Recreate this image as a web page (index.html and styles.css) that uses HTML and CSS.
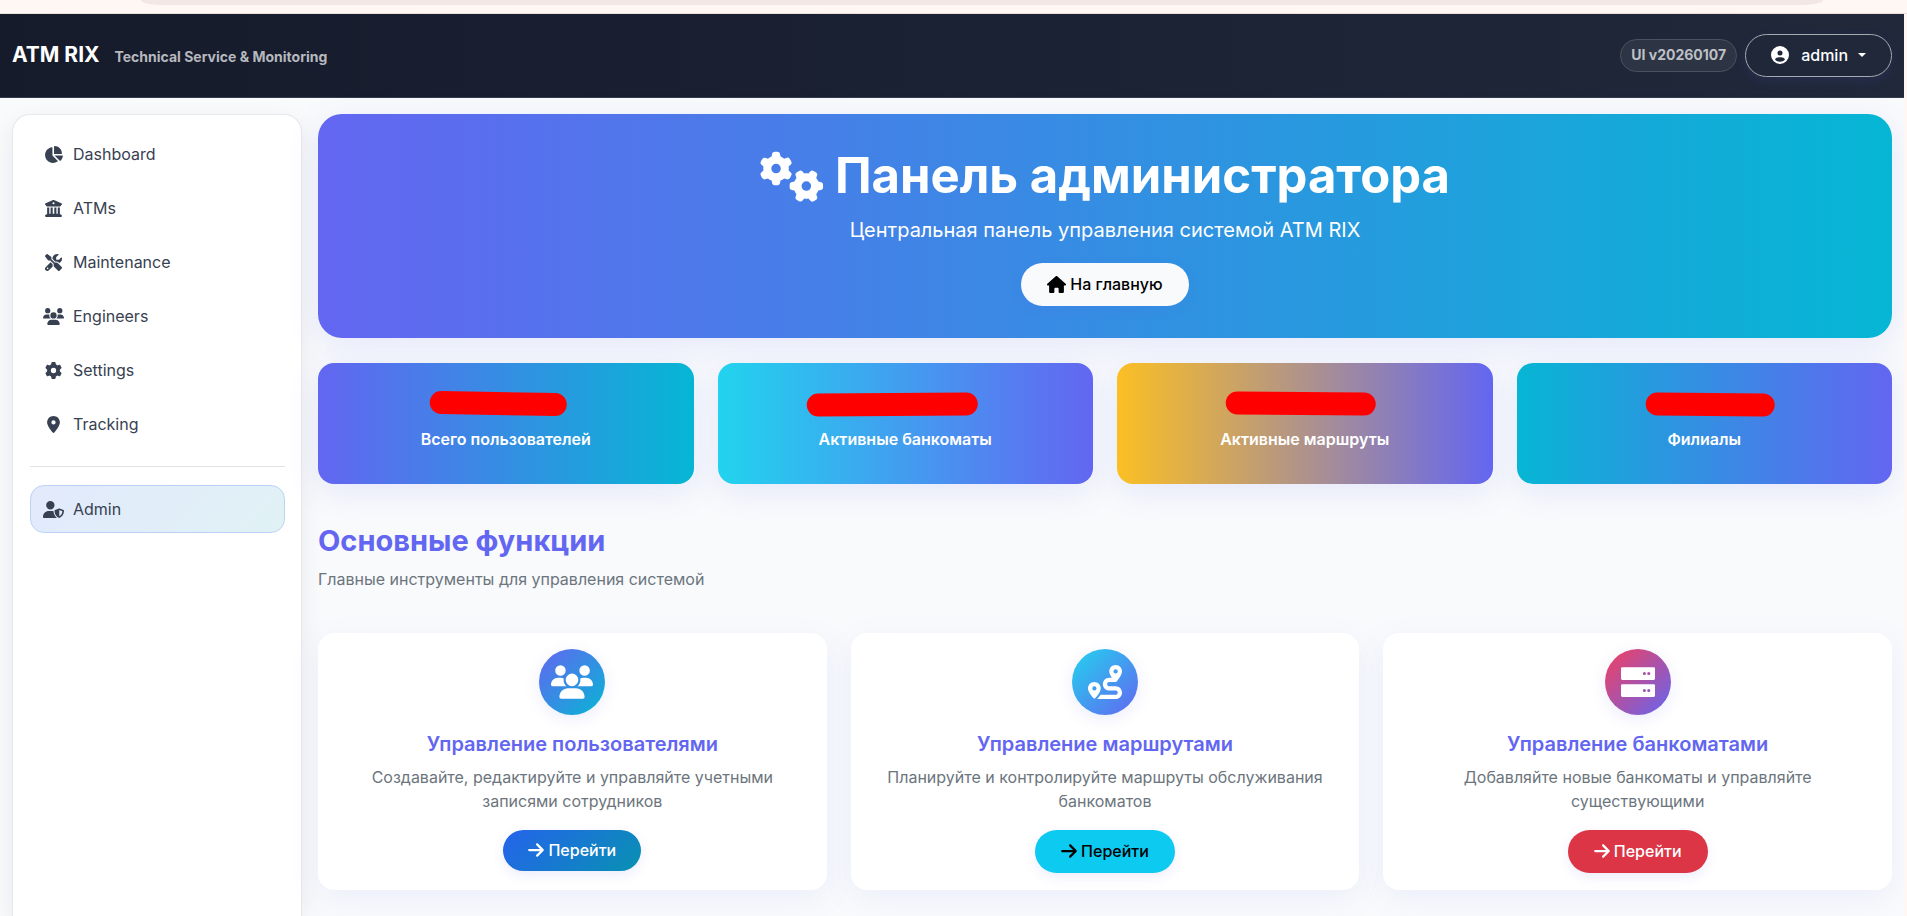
FILE: index.html
```html
<!DOCTYPE html>
<html lang="ru">
<head>
<meta charset="utf-8">
<title>ATM RIX</title>
<link rel="stylesheet" href="styles.css">
</head>
<body>
<svg class="sprite" aria-hidden="true">
  <symbol id="chart-pie" viewBox="0 0 576 512"><path d="M304 240V16.6c0-9 7-16.6 16-16.6C443.7 0 544 100.3 544 224c0 9-7.6 16-16.6 16H304zM32 272C32 150.7 122.1 50.3 239 34.3c9.2-1.3 17 6.1 17 15.4V288L412.5 444.5c6.7 6.7 6.2 17.7-1.5 23.1C371.8 495.6 323.8 512 272 512C139.5 512 32 404.6 32 272zm526.4 16c9.3 0 16.6 7.8 15.4 17c-7.7 55.9-34.6 105.6-73.9 142.3c-6 5.6-15.4 5.2-21.2-.7L320 288H558.4z"/></symbol>
  <symbol id="bank" viewBox="0 0 512 512"><path d="M243.4 2.6l-224 96c-14 6-21.8 21-18.7 35.8S16.8 160 32 160v8c0 13.3 10.7 24 24 24H456c13.3 0 24-10.7 24-24v-8c15.2 0 28.3-10.7 31.3-25.6s-4.8-29.9-18.7-35.8l-224-96c-8-3.4-17.2-3.4-25.2 0zM128 224H64V420.3c-.6 .3-1.2 .7-1.8 1.1l-48 32c-11.7 7.8-17 22.4-12.9 35.9S17.9 512 32 512H480c14.1 0 26.5-9.2 30.6-22.7s-1.1-28.1-12.9-35.9l-48-32c-.6-.4-1.2-.7-1.8-1.1V224H384V416H344V224H280V416H232V224H168V416H128V224zM256 64a32 32 0 1 1 0 64 32 32 0 1 1 0-64z"/></symbol>
  <symbol id="tools" viewBox="0 0 512 512"><path d="M78.6 5C69.1-2.4 55.6-1.5 47 7L7 47c-8.5 8.5-9.4 22-2.1 31.6l80 104c4.5 5.9 11.6 9.4 19 9.4h54.1l109 109c-14.7 29-10 65.4 14.3 89.6l112 112c12.5 12.5 32.8 12.5 45.3 0l64-64c12.5-12.5 12.5-32.8 0-45.3l-112-112c-24.2-24.2-60.6-29-89.6-14.3l-109-109V104c0-7.5-3.5-14.5-9.4-19L78.6 5zM19.9 396.1C7.2 408.8 0 426.1 0 444.1C0 481.6 30.4 512 67.9 512c18 0 35.3-7.2 48-19.9L233.7 374.3c-7.8-20.9-9-43.6-3.6-65.1l-61.7-61.7L19.9 396.1zM512 144c0-10.5-1.1-20.7-3.2-30.5c-2.4-11.2-16.1-14.1-24.2-6l-63.9 63.9c-3 3-7.1 4.7-11.3 4.7H352c-8.8 0-16-7.2-16-16V102.6c0-4.2 1.7-8.3 4.7-11.3l63.9-63.9c8.1-8.1 5.2-21.8-6-24.2C388.7 1.1 378.5 0 368 0C288.5 0 224 64.5 224 144l0 .8 85.3 85.3c36-9.1 75.8 .5 104 28.7L429 274.5c49-23 83-72.8 83-130.5zM56 432a24 24 0 1 1 48 0 24 24 0 1 1 -48 0z"/></symbol>
  <symbol id="users" viewBox="0 0 640 512"><path d="M144 0a80 80 0 1 1 0 160A80 80 0 1 1 144 0zM512 0a80 80 0 1 1 0 160A80 80 0 1 1 512 0zM0 298.7C0 239.8 47.8 192 106.7 192h42.7c15.9 0 31 3.5 44.6 9.7c-1.3 7.2-1.9 14.7-1.9 22.3c0 38.2 16.8 72.5 43.3 96c-.2 0-.4 0-.7 0H21.3C9.6 320 0 310.4 0 298.7zM405.3 320c-.2 0-.4 0-.7 0c26.6-23.5 43.3-57.8 43.3-96c0-7.6-.7-15-1.9-22.3c13.6-6.3 28.7-9.7 44.6-9.7h42.7C592.2 192 640 239.8 640 298.7c0 11.8-9.6 21.3-21.3 21.3H405.3zM224 224a96 96 0 1 1 192 0 96 96 0 1 1 -192 0zM128 485.3C128 411.7 187.7 352 261.3 352H378.7C452.3 352 512 411.7 512 485.3c0 14.7-11.9 26.7-26.7 26.7H154.7c-14.7 0-26.7-11.9-26.7-26.7z"/></symbol>
  <symbol id="gear" viewBox="0 0 512 512"><path d="M495.9 166.6c3.2 8.7 .5 18.4-6.4 24.6l-43.3 39.4c1.1 8.3 1.7 16.8 1.7 25.4s-.6 17.1-1.7 25.4l43.3 39.4c6.9 6.2 9.6 15.9 6.4 24.6c-4.4 11.9-9.7 23.3-15.8 34.3l-4.7 8.1c-6.6 11-14 21.4-22.1 31.2c-5.9 7.2-15.7 9.6-24.5 6.8l-55.7-17.7c-13.4 10.3-28.2 18.9-44 25.4l-12.5 57.1c-2 9.1-9 16.3-18.2 17.8c-13.8 2.3-28 3.5-42.5 3.5s-28.7-1.2-42.5-3.5c-9.2-1.5-16.2-8.7-18.2-17.8l-12.5-57.1c-15.8-6.5-30.6-15.1-44-25.4L83.1 425.9c-8.8 2.8-18.6 .3-24.5-6.8c-8.1-9.8-15.5-20.2-22.1-31.2l-4.7-8.1c-6.1-11-11.4-22.4-15.8-34.3c-3.2-8.7-.5-18.4 6.4-24.6l43.3-39.4C64.6 273.1 64 264.6 64 256s.6-17.1 1.7-25.4L22.4 191.2c-6.9-6.2-9.6-15.9-6.4-24.6c4.4-11.9 9.7-23.3 15.8-34.3l4.7-8.1c6.6-11 14-21.4 22.1-31.2c5.9-7.2 15.7-9.6 24.5-6.8l55.7 17.7c13.4-10.3 28.2-18.9 44-25.4l12.5-57.1c2-9.1 9-16.3 18.2-17.8C227.3 1.2 241.5 0 256 0s28.7 1.2 42.5 3.5c9.2 1.5 16.2 8.7 18.2 17.8l12.5 57.1c15.8 6.5 30.6 15.1 44 25.4l55.7-17.7c8.8-2.8 18.6-.3 24.5 6.8c8.1 9.8 15.5 20.2 22.1 31.2l4.7 8.1c6.1 11 11.4 22.4 15.8 34.3zM256 336a80 80 0 1 0 0-160 80 80 0 1 0 0 160z"/></symbol>
  <symbol id="pin" viewBox="0 0 384 512"><path d="M215.7 499.2C267 435 384 279.4 384 192C384 86 298 0 192 0S0 86 0 192c0 87.4 117 243 168.3 307.2c12.3 15.3 35.1 15.3 47.4 0zM192 128a64 64 0 1 1 0 128 64 64 0 1 1 0-128z"/></symbol>
  <symbol id="user-shield" viewBox="0 0 640 512"><path d="M224 256A128 128 0 1 0 224 0a128 128 0 1 0 0 256zm-45.7 48C79.8 304 0 383.8 0 482.3C0 498.7 13.3 512 29.7 512H418.3c1.8 0 3.5-.2 5.3-.5c-76.3-55.1-99.8-141-103.1-200.2c-16.1-4.8-33.1-7.3-50.7-7.3H178.3zm308.8-78.3l-120 48C358 277.4 352 286.2 352 296c0 63.3 25.9 168.8 134.8 214.2c5.9 2.5 12.6 2.5 18.5 0C614.1 464.8 640 359.3 640 296c0-9.8-6-18.6-15.1-22.3l-120-48c-5.7-2.3-12.1-2.3-17.8 0zM591.4 312c-3.9 50.7-27.2 116.7-95.4 149.7V273.8L591.4 312z"/></symbol>
  <symbol id="gears" viewBox="0 0 640 512"><path d="M308.5 135.3c7.1-6.3 9.9-16.2 6.2-25c-2.3-5.3-4.8-10.5-7.6-15.5L304 89.4c-3-5-6.3-9.9-9.8-14.6c-5.7-7.6-15.7-10.1-24.7-7.1l-28.2 9.3c-10.7-8.8-23-16-36.2-20.9L199 27.1c-1.9-9.3-9.1-16.7-18.5-17.8C173.9 8.4 167.2 8 160.4 8h-.7c-6.8 0-13.5 .4-20.1 1.2c-9.4 1.1-16.6 8.6-18.5 17.8L115 56.1c-13.3 5-25.5 12.1-36.2 20.9L50.5 67.8c-9-3-19-.5-24.7 7.1c-3.5 4.7-6.8 9.6-9.9 14.6l-3 5.3c-2.8 5-5.3 10.2-7.6 15.6c-3.7 8.7-.9 18.6 6.2 25l22.2 19.8C32.6 161.9 32 168.9 32 176s.6 14.1 1.7 20.9L11.5 216.7c-7.1 6.3-9.9 16.2-6.2 25c2.3 5.3 4.8 10.5 7.6 15.6l3 5.2c3 5.1 6.3 9.9 9.9 14.6c5.7 7.6 15.7 10.1 24.7 7.1l28.2-9.3c10.7 8.8 23 16 36.2 20.9l6.1 29.1c1.9 9.3 9.1 16.7 18.5 17.8c6.7 .8 13.5 1.2 20.4 1.2s13.7-.4 20.4-1.2c9.4-1.1 16.6-8.6 18.5-17.8l6.1-29.1c13.3-5 25.5-12.1 36.2-20.9l28.2 9.3c9 3 19 .5 24.7-7.1c3.5-4.7 6.8-9.5 9.8-14.6l3.1-5.4c2.8-5 5.3-10.2 7.6-15.5c3.7-8.7 .9-18.6-6.2-25l-22.2-19.8c1.1-6.8 1.7-13.8 1.7-20.9s-.6-14.1-1.7-20.9l22.2-19.8zM112 176a48 48 0 1 1 96 0 48 48 0 1 1 -96 0zM504.7 500.5c6.3 7.1 16.2 9.9 25 6.2c5.3-2.3 10.5-4.8 15.5-7.6l5.4-3.1c5-3 9.9-6.3 14.6-9.8c7.6-5.7 10.1-15.7 7.1-24.7l-9.3-28.2c8.8-10.7 16-23 20.9-36.2l29.1-6.1c9.3-1.9 16.7-9.1 17.8-18.5c.8-6.7 1.2-13.5 1.2-20.4s-.4-13.7-1.2-20.4c-1.1-9.4-8.6-16.6-17.8-18.5L583.9 307c-5-13.3-12.1-25.5-20.9-36.2l9.3-28.2c3-9 .5-19-7.1-24.7c-4.7-3.5-9.6-6.8-14.6-9.9l-5.3-3c-5-2.8-10.2-5.3-15.6-7.6c-8.7-3.7-18.6-.9-25 6.2l-19.8 22.2c-6.8-1.1-13.8-1.7-20.9-1.7s-14.1 .6-20.9 1.7l-19.8-22.2c-6.3-7.1-16.2-9.9-25-6.2c-5.3 2.3-10.5 4.8-15.6 7.6l-5.2 3c-5.1 3-9.9 6.3-14.6 9.9c-7.6 5.7-10.1 15.7-7.1 24.7l9.3 28.2c-8.8 10.7-16 23-20.9 36.2L315.1 313c-9.3 1.9-16.7 9.1-17.8 18.5c-.8 6.7-1.2 13.5-1.2 20.4s.4 13.7 1.2 20.4c1.1 9.4 8.6 16.6 17.8 18.5l29.1 6.1c5 13.3 12.1 25.5 20.9 36.2l-9.3 28.2c-3 9-.5 19 7.1 24.7c4.7 3.5 9.5 6.8 14.6 9.8l5.4 3.1c5 2.8 10.2 5.3 15.5 7.6c8.7 3.7 18.6 .9 25-6.2l19.8-22.2c6.8 1.1 13.8 1.7 20.9 1.7s14.1-.6 20.9-1.7l19.8 22.2zM464 304a48 48 0 1 1 0 96 48 48 0 1 1 0-96z"/></symbol>
  <symbol id="house" viewBox="0 0 576 512"><path d="M575.8 255.5c0 18-15 32.1-32 32.1h-32l.7 160.2c0 2.7-.2 5.4-.5 8.1V472c0 22.1-17.9 40-40 40H456c-1.1 0-2.2 0-3.3-.1c-1.4 .1-2.8 .1-4.2 .1H416 392c-22.1 0-40-17.9-40-40V448 384c0-17.7-14.3-32-32-32H256c-17.7 0-32 14.3-32 32v64 24c0 22.1-17.9 40-40 40H160 128.1c-1.5 0-3-.1-4.5-.2c-1.2 .1-2.4 .2-3.6 .2H104c-22.1 0-40-17.9-40-40V360c0-.9 0-1.9 .1-2.8V287.6H32c-18 0-32-14-32-32.1c0-9 3-17 10-24L266.4 8c7-7 15-8 22-8s15 2 21 7L564.8 231.5c8 7 12 15 11 24z"/></symbol>
  <symbol id="arrow" viewBox="0 0 448 512"><path d="M438.6 278.6c12.5-12.5 12.5-32.8 0-45.3l-160-160c-12.5-12.5-32.8-12.5-45.3 0s-12.5 32.8 0 45.3L338.8 224 32 224c-17.7 0-32 14.3-32 32s14.3 32 32 32l306.7 0L233.4 393.4c-12.5 12.5-12.5 32.8 0 45.3s32.8 12.5 45.3 0l160-160z"/></symbol>
  <symbol id="route" viewBox="0 0 512 512"><path d="M512 96c0 50.2-59.1 125.1-84.6 155c-3.8 4.4-9.4 6.1-14.5 5H320c-17.7 0-32 14.3-32 32s14.3 32 32 32h96c53 0 96 43 96 96s-43 96-96 96H139.6c8.7-9.9 19.3-22.6 30-36.8c6.3-8.4 12.8-17.6 19-27.2H416c17.7 0 32-14.3 32-32s-14.3-32-32-32H320c-53 0-96-43-96-96s43-96 96-96h39.8c-21-31.5-39.8-67.7-39.8-96c0-53 43-96 96-96s96 43 96 96zM117.1 489.1c-3.8 4.3-7.2 8.1-10.1 11.3l-1.8 2-.2-.2c-6 4.6-14.6 4-20-1.8C59.8 473 0 402.5 0 352c0-53 43-96 96-96s96 43 96 96c0 30-21.1 67-43.5 97.9c-10.7 14.7-21.7 28-30.8 38.5l-.6 .7zM128 352a32 32 0 1 0 -64 0 32 32 0 1 0 64 0zM416 128a32 32 0 1 0 0-64 32 32 0 1 0 0 64z"/></symbol>
  <symbol id="server" viewBox="0 0 512 512"><path fill-rule="evenodd" d="M20 32H492a20 20 0 0 1 20 20V204a20 20 0 0 1 -20 20H20a20 20 0 0 1 -20 -20V52a20 20 0 0 1 20 -20zM352 104a24 24 0 1 0 0 48 24 24 0 1 0 0-48zM418 104a24 24 0 1 0 0 48 24 24 0 1 0 0-48zM20 288H492a20 20 0 0 1 20 20V460a20 20 0 0 1 -20 20H20a20 20 0 0 1 -20 -20V308a20 20 0 0 1 20 -20zM352 360a24 24 0 1 0 0 48 24 24 0 1 0 0-48zM418 360a24 24 0 1 0 0 48 24 24 0 1 0 0-48z"/></symbol>
  <symbol id="circle-user" viewBox="0 0 512 512"><path d="M399 384.2C376.9 345.8 335.4 320 288 320H224c-47.4 0-88.9 25.8-111 64.2c35.2 39.2 86.2 63.8 143 63.8s107.8-24.7 143-63.8zM0 256a256 256 0 1 1 512 0A256 256 0 1 1 0 256zm256 16a72 72 0 1 0 0-144 72 72 0 1 0 0 144z"/></symbol>
</svg>

<div class="browser-edge"><div class="address-bar"></div></div>

<div class="page">
  <header class="topbar">
    <a class="brand" href="#">ATM RIX <small class="tagline">Technical Service &amp; Monitoring</small></a>
    <div class="topbar-end">
      <span class="version">UI v20260107</span>
      <button class="account" type="button"><svg class="icon-16"><use href="#circle-user"/></svg><span>admin</span><i class="caret"></i></button>
    </div>
  </header>

  <div class="layout">
    <nav class="sidebar" aria-label="Menu">
      <a class="nav-link" href="#"><span class="nav-icon"><svg class="icon-18"><use href="#chart-pie"/></svg></span>Dashboard</a>
      <a class="nav-link" href="#"><span class="nav-icon"><svg class="icon-17"><use href="#bank"/></svg></span>ATMs</a>
      <a class="nav-link" href="#"><span class="nav-icon"><svg class="icon-17"><use href="#tools"/></svg></span>Maintenance</a>
      <a class="nav-link" href="#"><span class="nav-icon"><svg class="icon-wide"><use href="#users"/></svg></span>Engineers</a>
      <a class="nav-link" href="#"><span class="nav-icon"><svg class="icon-17"><use href="#gear"/></svg></span>Settings</a>
      <a class="nav-link" href="#"><span class="nav-icon"><svg class="icon-17"><use href="#pin"/></svg></span>Tracking</a>
      <hr class="divider">
      <a class="nav-link active" href="#" aria-current="page"><span class="nav-icon"><svg class="icon-wide"><use href="#user-shield"/></svg></span>Admin</a>
    </nav>

    <main class="content">
      <section class="hero">
        <h1 class="hero-title"><svg class="hero-icon"><use href="#gears"/></svg>Панель администратора</h1>
        <p class="hero-text">Центральная панель управления системой ATM RIX</p>
        <a class="btn btn-light" href="#"><svg class="icon-home"><use href="#house"/></svg>На главную</a>
      </section>

      <section class="stats">
        <div class="stat indigo-cyan"><svg class="redaction" viewBox="0 0 375 24"><path d="M123 11.500L237 13.500"/></svg><span>Всего пользователей</span></div>
        <div class="stat sky-indigo"><svg class="redaction" viewBox="0 0 375 24"><path d="M100 14L248 13"/></svg><span>Активные банкоматы</span></div>
        <div class="stat amber-indigo"><svg class="redaction" viewBox="0 0 375 24"><path d="M120 12L247 13"/></svg><span>Активные маршруты</span></div>
        <div class="stat cyan-indigo"><svg class="redaction" viewBox="0 0 375 24"><path d="M140 13L246 14"/></svg><span>Филиалы</span></div>
      </section>

      <header class="section-head">
        <h2 class="section-title">Основные функции</h2>
        <p class="section-text">Главные инструменты для управления системой</p>
      </header>

      <section class="cards">
        <article class="card">
          <div class="badge badge-users"><svg class="badge-wide"><use href="#users"/></svg></div>
          <h3 class="card-title">Управление пользователями</h3>
          <p class="card-text">Создавайте, редактируйте и управляйте учетными записями сотрудников</p>
          <a class="btn btn-primary" href="#"><svg class="icon-arrow"><use href="#arrow"/></svg>Перейти</a>
        </article>
        <article class="card">
          <div class="badge badge-routes"><svg class="badge-icon"><use href="#route"/></svg></div>
          <h3 class="card-title">Управление маршрутами</h3>
          <p class="card-text">Планируйте и контролируйте маршруты обслуживания банкоматов</p>
          <a class="btn btn-info" href="#"><svg class="icon-arrow"><use href="#arrow"/></svg>Перейти</a>
        </article>
        <article class="card">
          <div class="badge badge-atms"><svg class="badge-icon"><use href="#server"/></svg></div>
          <h3 class="card-title">Управление банкоматами</h3>
          <p class="card-text">Добавляйте новые банкоматы и управляйте существующими</p>
          <a class="btn btn-danger" href="#"><svg class="icon-arrow"><use href="#arrow"/></svg>Перейти</a>
        </article>
      </section>
    </main>
  </div>
</div>
</body>
</html>
```
FILE: styles.css
```css
* { box-sizing: border-box; }

html { height: 100%; }

body {
  margin: 0;
  height: 100%;
  display: flex;
  flex-direction: column;
  overflow: hidden;
  background: #fff7f4;
  color: #0f172a;
  font: 400 16px/24px Inter, "Noto Sans", sans-serif;
  font-optical-sizing: none;
}

h1, h2, h3, p { margin: 0; }
a { color: inherit; text-decoration: none; }
svg { display: block; fill: currentColor; flex: none; }
.sprite { position: absolute; width: 0; height: 0; }

.browser-edge {
  flex: none;
  height: 14px;
  padding: 0 84px 0 141px;
  border-bottom: 1px solid #e9dfdc;
}
.address-bar {
  height: 5px;
  border-radius: 0 0 20px 20px / 0 0 5px 5px;
  background: #f2e7e4;
}

.page {
  flex: 1;
  min-height: 0;
  display: flex;
  flex-direction: column;
  margin-right: 3px;
  overflow: hidden;
  background: #f8fafc;
}

.topbar {
  flex: none;
  display: flex;
  align-items: center;
  justify-content: space-between;
  height: 84px;
  padding: 0 12px;
  border-bottom: 1px solid #343b4a;
  background: linear-gradient(90deg, #151b2b, #20283a);
  color: #fff;
}
.brand { font-size: 21px; font-weight: 700; line-height: 30px; }
.tagline { margin-left: 10px; font-size: 14px; color: #b6b8be; }
.topbar-end { display: flex; align-items: center; gap: 8px; }
.version {
  padding: 3px 10px 5px;
  border: 1px solid #4b5160;
  border-radius: 17px;
  background: #2d3444;
  color: #bdc0c5;
  font-size: 14px;
  font-weight: 700;
  line-height: 23px;
}
.account {
  display: flex;
  align-items: center;
  padding: 8px 25px 9px;
  border: 1px solid #a5a9b0;
  border-radius: 22px;
  background: transparent;
  box-shadow: 0 4px 12px rgba(99, 102, 241, .12);
  color: #fff;
  font: 500 16px/24px Inter, "Noto Sans", sans-serif;
}
.account span { margin-left: 12px; }
.caret {
  margin-left: 10px;
  border: 4px solid transparent;
  border-top-color: #fff;
  border-bottom: 0;
}

.layout {
  flex: 1;
  min-height: 0;
  display: grid;
  grid-template-columns: 290px minmax(0, 1fr);
  gap: 16px;
  padding: 16px 12px 0;
}

.sidebar {
  padding: 15px 16px 0 17px;
  display: flex;
  flex-direction: column;
  gap: 6px;
  border: 1px solid #e6e8ea;
  border-bottom: 0;
  border-radius: 18px 18px 0 0;
  background: #fff;
  box-shadow: 0 8px 24px rgba(15, 23, 42, .07);
}
.nav-link {
  display: flex;
  align-items: center;
  gap: 9px;
  padding: 11px 12px;
  border: 1px solid transparent;
  border-radius: 14px;
  color: #374151;
}
.nav-link.active {
  border-color: #bcd2f5;
  background: linear-gradient(135deg, #e2e9fc, #e0f2f5);
}
.nav-icon { display: flex; width: 21px; justify-content: center; }
.icon-16 { width: 18px; height: 18px; }
.icon-17 { width: 17px; height: 17px; }
.icon-18 { width: 19px; height: 17px; }
.icon-wide { width: 21px; height: 17px; }
.divider {
  width: 100%;
  margin: 12px 0;
  border: 0;
  border-top: 1px solid #dfe3e6;
}

.hero {
  display: flex;
  flex-direction: column;
  align-items: center;
  padding: 32px 24px;
  border-radius: 24px;
  background: linear-gradient(90deg, #6366f1, #06b6d4);
  box-shadow: 0 8px 32px rgba(99, 102, 241, .12);
  color: #fff;
}
.hero-title {
  display: flex;
  align-items: center;
  gap: 11px;
  font-size: 49px;
  font-weight: 700;
  line-height: 60px;
}
.hero-icon { width: 64px; height: 51px; }
.hero-text { margin: 9px 0 18px; font-size: 20px; line-height: 30px; }

.btn {
  display: flex;
  align-items: center;
  gap: 4px;
  border-radius: 22px;
  padding: 9px 26px 10px;
  box-shadow: 0 4px 12px rgba(99, 102, 241, .12);
  font-weight: 500;
}
.btn-light { background: #f8fafc; color: #000; }
.btn-primary { padding: 8px 25px 9px; background: linear-gradient(135deg, #2563eb, #0891b2); color: #fff; }
.btn-info { background: #0dcaf0; color: #000; }
.btn-danger { background: #dc3545; color: #fff; }
.icon-home { width: 19px; height: 17px; }
.icon-arrow { width: 16px; height: 18px; }

.stats {
  display: grid;
  grid-template-columns: repeat(4, 1fr);
  gap: 24px;
  margin-top: 25px;
}
.stat {
  display: flex;
  flex-direction: column;
  align-items: center;
  gap: 12px;
  padding: 28px 0 32px;
  border-radius: 16px;
  box-shadow: 0 8px 32px rgba(99, 102, 241, .12);
  color: #fff;
  font-weight: 600;
  line-height: 25px;
}
.redaction {
  width: 100%;
  height: 24px;
  overflow: visible;
  stroke: #f00;
  stroke-width: 23;
  stroke-linecap: round;
}
.indigo-cyan { background: linear-gradient(90deg, #6366f1, #06b6d4); }
.sky-indigo { background: linear-gradient(90deg, #22d3ee, #6366f1); }
.amber-indigo { background: linear-gradient(90deg, #fbbf24, #6366f1); }
.cyan-indigo { background: linear-gradient(90deg, #06b6d4, #6366f1); }

.section-head { margin: 37px 0 42px; }
.section-title { color: #6366f1; font-size: 29px; font-weight: 700; line-height: 40px; }
.section-text { margin-top: 6px; color: #6c757d; line-height: 24px; }

.cards {
  display: grid;
  grid-template-columns: repeat(3, 1fr);
  gap: 24px;
}
.card {
  display: flex;
  flex-direction: column;
  align-items: center;
  min-height: 257px;
  padding: 16px 16px 0;
  border-radius: 16px;
  background: #fff;
  box-shadow: 0 8px 32px rgba(99, 102, 241, .08);
  text-align: center;
}
.badge {
  display: grid;
  place-items: center;
  width: 66px;
  height: 66px;
  border-radius: 50%;
  box-shadow: 0 4px 16px rgba(99, 102, 241, .12);
  color: #fff;
}
.badge-icon { width: 34px; height: 34px; }
.badge-wide { width: 42px; height: 34px; }
.badge-users { background: linear-gradient(135deg, #6366f1, #06b6d4); }
.badge-routes { background: linear-gradient(135deg, #22d3ee, #6366f1); }
.badge-atms { background: linear-gradient(135deg, #f43f5e, #6366f1); }
.card-title { margin-top: 16px; color: #6366f1; font-size: 20px; font-weight: 600; line-height: 26px; }
.card-text { margin: 8px 0 17px; padding: 0 8px; color: #6c757d; line-height: 24px; }
```
